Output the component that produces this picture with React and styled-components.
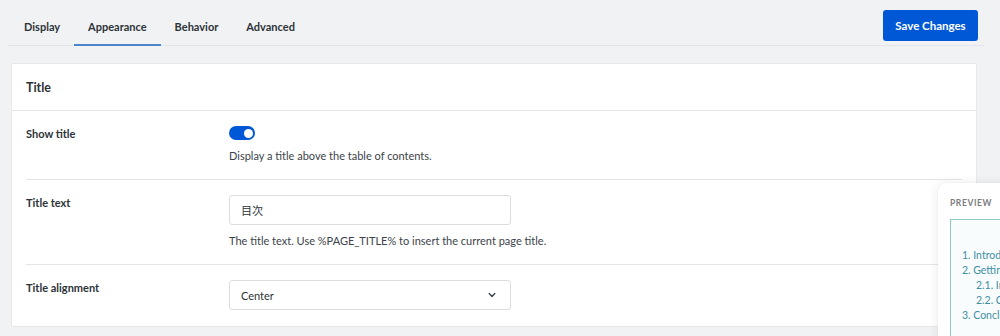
import React from 'react';
import styled, { createGlobalStyle } from 'styled-components';

const colors = {
    page: '#f1f2f4',
    line: '#e3e5e8',
    text: '#2c3338',
    muted: '#3c434a',
    blue: '#0058d6',
    tab: '#4a86c8',
    teal: '#8fcac5',
    link: '#3d8fa3',
};

const tabs = ['Display', 'Appearance', 'Behavior', 'Advanced'];

const items = [
    { label: '1. Introduction', sub: false },
    { label: '2. Getting Started', sub: false },
    { label: '2.1. Installation', sub: true },
    { label: '2.2. Configuration', sub: true },
    { label: '3. Conclusion', sub: false },
];

const App = () => {
    return (
        <>
            <GlobalStyle />
            <StyledPage>
                <StyledTopBar>
                    <StyledTabs>
                        {tabs.map((t) => (
                            <StyledTab key={t} $active={t === 'Appearance'}>{t}</StyledTab>
                        ))}
                    </StyledTabs>
                    <StyledSave>Save Changes</StyledSave>
                </StyledTopBar>

                <StyledMain>
                    <StyledCard>
                        <StyledCardHeader>Title</StyledCardHeader>

                        <StyledRow>
                            <StyledLabel>Show title</StyledLabel>
                            <StyledControl>
                                <StyledToggle $on />
                                <StyledHelp>Display a title above the table of contents.</StyledHelp>
                            </StyledControl>
                        </StyledRow>

                        <StyledRow>
                            <StyledLabel>Title text</StyledLabel>
                            <StyledControl>
                                <StyledField>目次</StyledField>
                                <StyledHelp>The title text. Use %PAGE_TITLE% to insert the current page title.</StyledHelp>
                            </StyledControl>
                        </StyledRow>

                        <StyledRow>
                            <StyledLabel>Title alignment</StyledLabel>
                            <StyledControl>
                                <StyledField>
                                    Center
                                    <svg width="10" height="10" viewBox="0 0 10 10">
                                        <path d="M2.2 3.6 L5 6.4 L7.8 3.6" fill="none" stroke="#3c434a" strokeWidth="1.4" strokeLinecap="round" strokeLinejoin="round" />
                                    </svg>
                                </StyledField>
                            </StyledControl>
                        </StyledRow>
                    </StyledCard>
                </StyledMain>

                <StyledPreview>
                    <StyledPreviewLabel>Preview</StyledPreviewLabel>
                    <StyledTocBox>
                        <StyledTocTitle>目次</StyledTocTitle>
                        {items.map((it) => (
                            <StyledTocItem key={it.label} $sub={it.sub}>{it.label}</StyledTocItem>
                        ))}
                    </StyledTocBox>
                </StyledPreview>
            </StyledPage>
        </>
    );
}

const GlobalStyle = createGlobalStyle`
    html, body {
        margin: 0;
        padding: 0;
        background: ${colors.page};
        font-family: Lato, "Noto Sans", "Noto Sans CJK JP", sans-serif;
        color: ${colors.text};
        overflow: hidden;
    }
`;

const StyledPage = styled.div`
    position: relative;
    width: 1000px;
    height: 336px;
    overflow: hidden;
`;

const StyledTopBar = styled.div`
    display: flex;
    justify-content: space-between;
    align-items: flex-start;
    height: 45px;
    margin: 0 15px 0 8px;
    border-bottom: 1px solid ${colors.line};
`;

const StyledTabs = styled.div`
    display: flex;
    padding-left: 2px;
`;

const StyledTab = styled.div`
    height: 35px;
    padding: 9px 14px 0;
    box-sizing: content-box;
    display: flex;
    align-items: center;
    font-size: 11px;
    font-weight: 700;
    color: ${colors.text};
    border-bottom: 2px solid ${(p) => (p.$active ? colors.tab : 'transparent')};
    margin-bottom: -1px;
`;

const StyledSave = styled.button`
    margin: 10px 7px 0 0;
    height: 31px;
    width: 95px;
    padding: 0;
    border: none;
    border-radius: 3px;
    background: ${colors.blue};
    color: #fff;
    font-family: inherit;
    font-size: 11.5px;
    font-weight: 700;
`;

const StyledMain = styled.div`
    padding: 17px 23px 0 11px;
`;

const StyledCard = styled.div`
    background: #fff;
    border: 1px solid #e6e8ea;
    border-radius: 2px;
`;

const StyledCardHeader = styled.div`
    height: 46px;
    display: flex;
    align-items: center;
    padding: 0 14px;
    font-size: 12.5px;
    font-weight: 700;
    border-bottom: 1px solid ${colors.line};
`;

const StyledRow = styled.div`
    display: grid;
    grid-template-columns: 203px 1fr;
    margin: 0 14px;
    padding: 15px 0 16px;
    border-bottom: 1px solid ${colors.line};

    &:first-of-type {
        padding-top: 18px;
    }

    &:last-child {
        border-bottom: none;
        padding-bottom: 16px;
    }
`;

const StyledLabel = styled.div`
    font-size: 11px;
    font-weight: 700;
    line-height: 16px;
`;

const StyledControl = styled.div`
    display: flex;
    flex-direction: column;
    align-items: flex-start;
`;

const StyledToggle = styled.div`
    position: relative;
    width: 26px;
    height: 14px;
    border-radius: 7px;
    background: ${(p) => (p.$on ? colors.blue : '#c3c4c7')};

    &::after {
        content: '';
        position: absolute;
        top: 2.5px;
        left: ${(p) => (p.$on ? '14.5px' : '2.5px')};
        width: 9px;
        height: 9px;
        border-radius: 50%;
        background: #fff;
    }
`;

const StyledHelp = styled.div`
    margin-top: 8px;
    font-size: 11px;
    line-height: 15px;
    color: ${colors.muted};
`;

const StyledField = styled.div`
    box-sizing: border-box;
    width: 282px;
    height: 30px;
    display: flex;
    align-items: center;
    justify-content: space-between;
    padding: 0 13px 0 11px;
    border: 1px solid #dcdde0;
    border-radius: 3px;
    font-size: 11px;
    color: ${colors.text};
    background: #fff;

    & + div {
        margin-top: 8px;
    }
`;

const StyledPreview = styled.div`
    position: absolute;
    left: 938px;
    top: 183px;
    width: 230px;
    height: 170px;
    box-sizing: border-box;
    padding: 13px 12px;
    background: #fff;
    border-radius: 8px 0 0 0;
    box-shadow: 0 0 12px rgba(0, 0, 0, 0.08), 0 0 1px rgba(0, 0, 0, 0.12);
`;

const StyledPreviewLabel = styled.div`
    font-size: 8.5px;
    font-weight: 700;
    letter-spacing: 0.6px;
    text-transform: uppercase;
    color: #7a7d80;
    line-height: 15px;
`;

const StyledTocBox = styled.div`
    margin-top: 8px;
    height: 113px;
    padding: 12px 11px 0;
    border: 1px solid ${colors.teal};
    background: #f9fcfc;
`;

const StyledTocTitle = styled.div`
    text-align: center;
    font-size: 11px;
    font-weight: 700;
    line-height: 16px;
    color: ${colors.text};
`;

const StyledTocItem = styled.div`
    font-size: 10.5px;
    line-height: 15px;
    white-space: nowrap;
    color: ${colors.link};
    padding-left: ${(p) => (p.$sub ? '14px' : '0')};
`;

export default App;
